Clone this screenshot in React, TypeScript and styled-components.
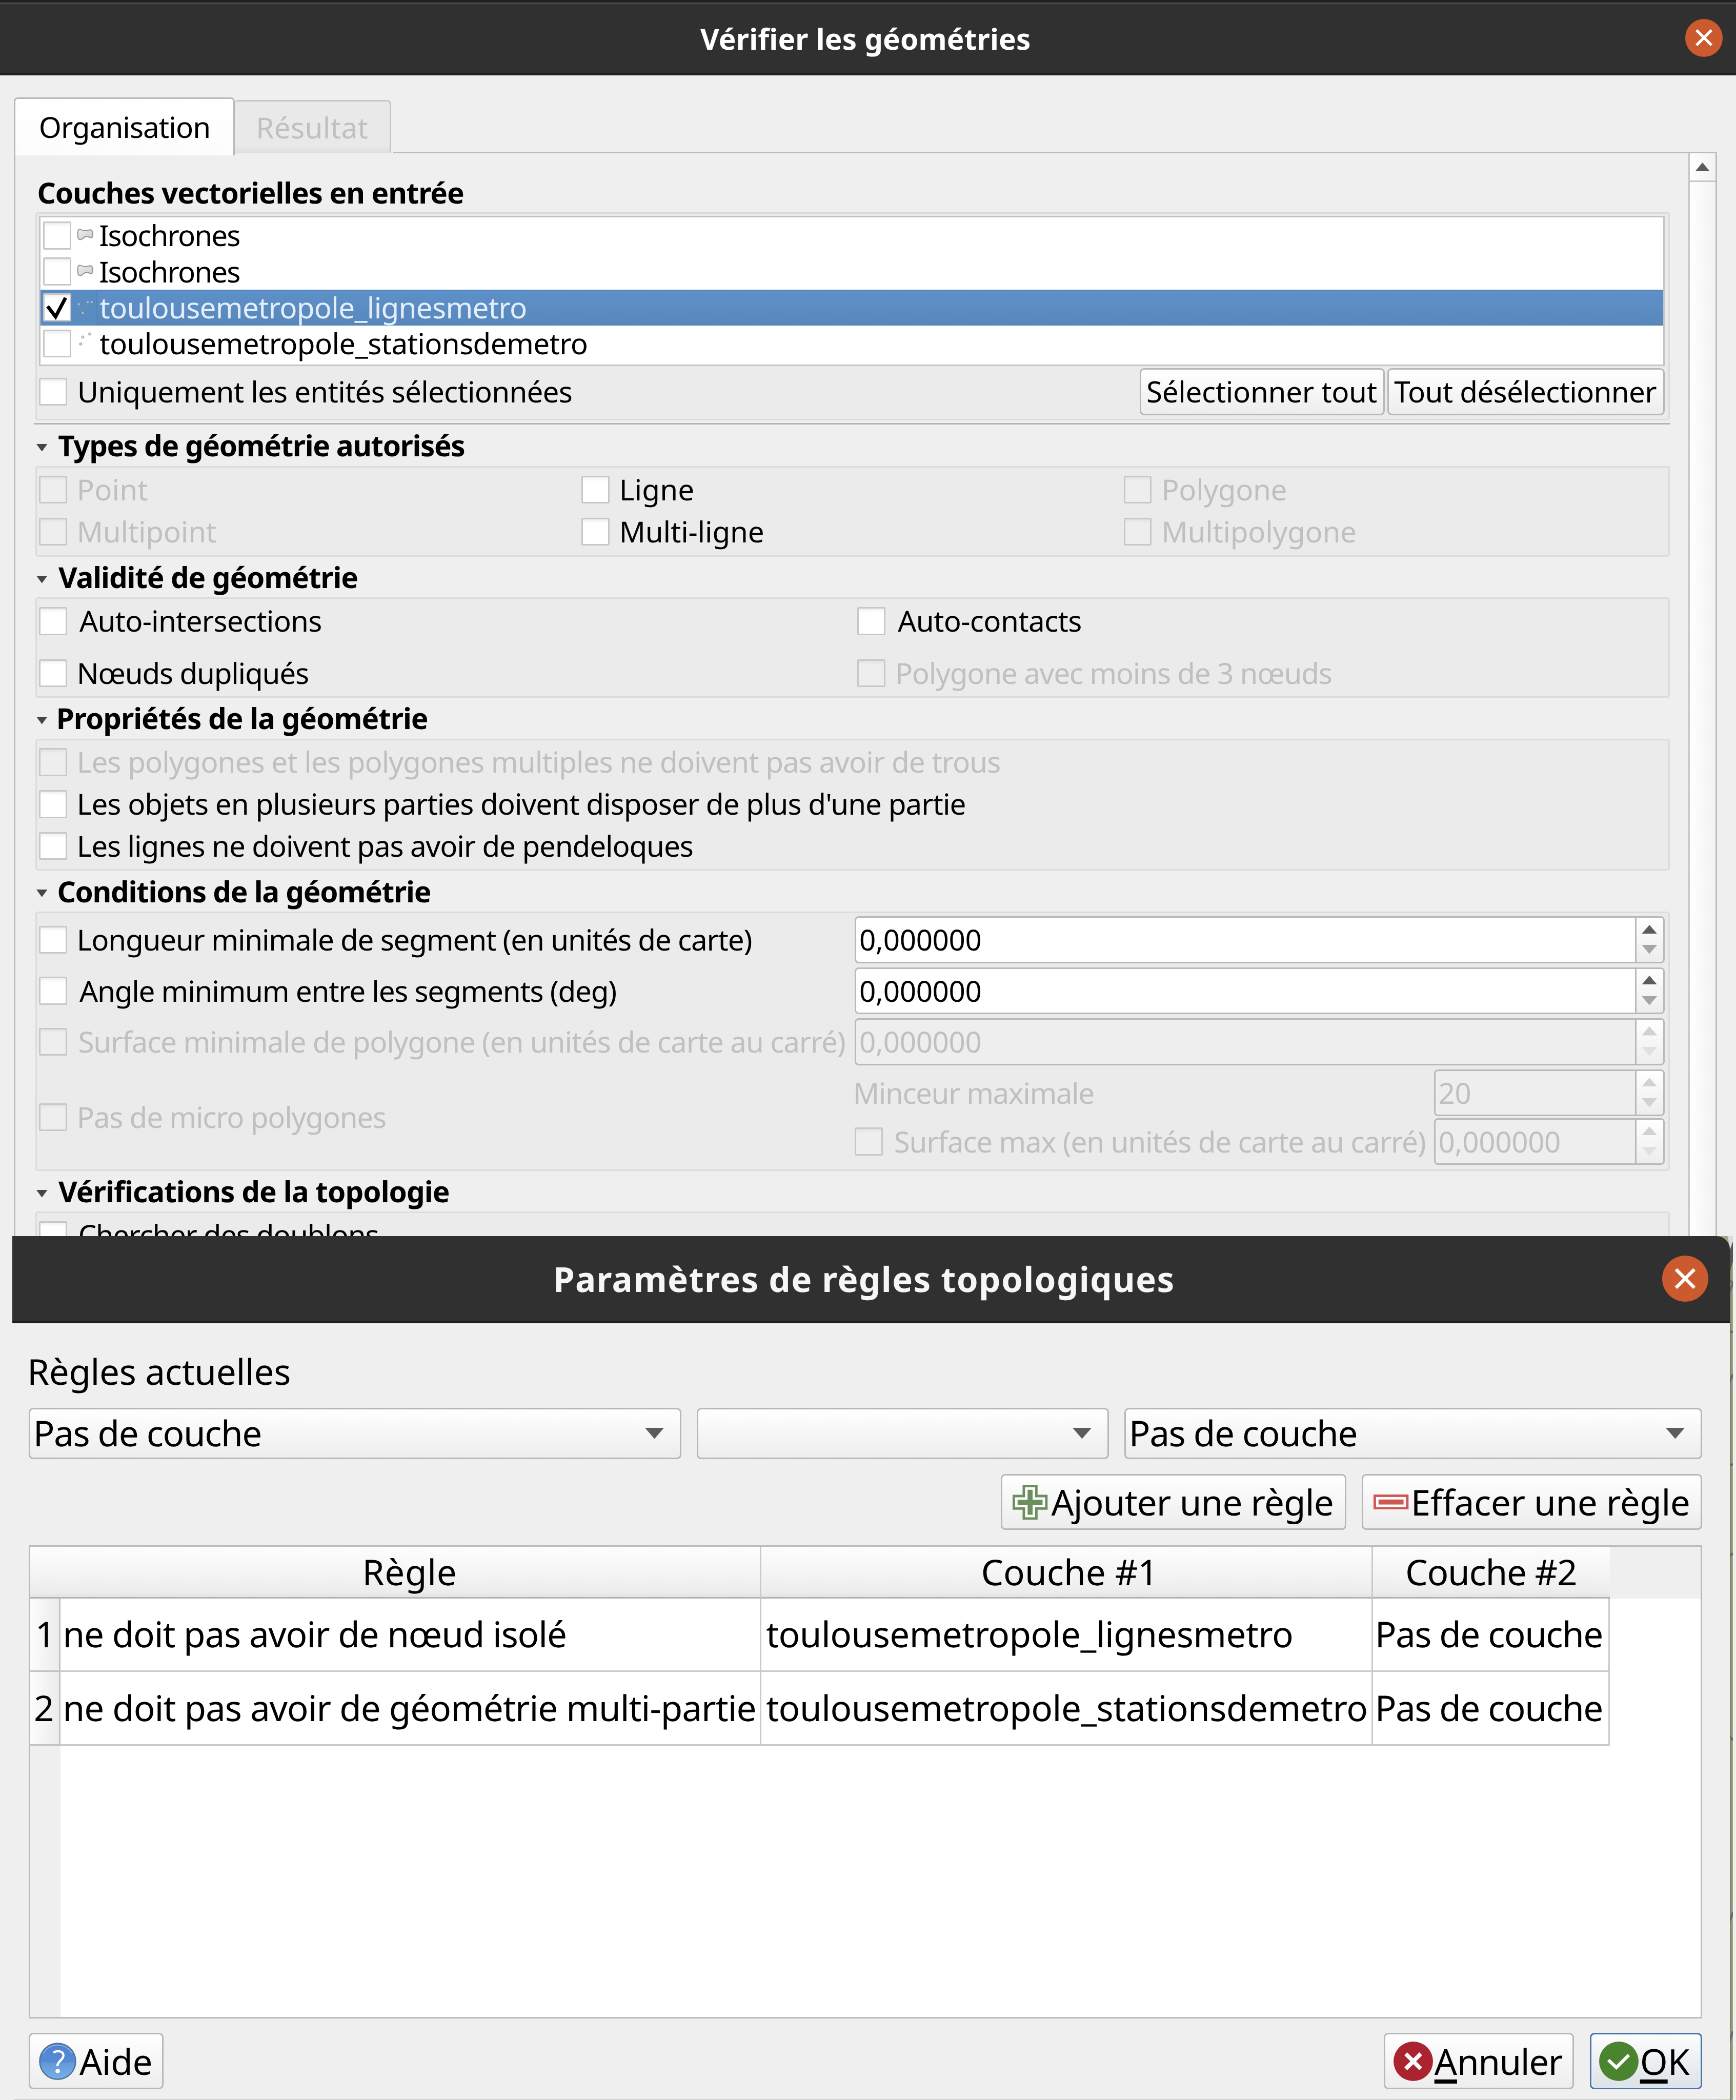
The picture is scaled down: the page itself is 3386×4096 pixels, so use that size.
import React, { useLayoutEffect, useState } from 'react';
import styled, { createGlobalStyle, css } from 'styled-components';

/* Design units: the layout is designed on a 3472-unit grid. */
const u = (n: number) => `${+(n * 0.975).toFixed(2)}px`;

const FONT = '"Noto Sans", "Open Sans", sans-serif';
const LINE = '#bcbcbc';
const MUTED = '#c0c0c0';
const BIG = 71;

const GlobalStyle = createGlobalStyle`
  * { box-sizing: border-box; }
  html, body { margin: 0; padding: 0; background: #efefef; }
  body { font-family: ${FONT}; color: #000; overflow: hidden; text-rendering: geometricPrecision; }
`;

/* ---------- text ---------- */

type LabelProps = {
  text: string;
  w: number;
  size?: number;
  bold?: boolean;
  color?: string;
  mnemonic?: boolean;
};

const LabelBox = styled.span<{ $w: number; $size: number; $bold?: boolean; $color: string }>`
  display: block;
  flex: none;
  width: ${p => u(p.$w)};
  font-size: ${p => u(p.$size)};
  line-height: ${p => u(p.$size * 1.2)};
  font-weight: ${p => (p.$bold ? 700 : 400)};
  color: ${p => p.$color};
  white-space: pre;
  font-kerning: normal;
`;

const Glyphs = styled.span`
  display: inline-block;
`;

const Mnemonic = styled.span`
  letter-spacing: 0;
  text-decoration: underline;
  text-decoration-thickness: ${u(8)};
  text-underline-offset: ${u(9)};
  text-decoration-skip-ink: none;
`;

/* Spreads a caption over its given ink width by tracking. */
function Label({ text, w, size = 58, bold, color = '#000', mnemonic }: LabelProps) {
  const [fit, setFit] = useState({ spacing: 0, shift: 0 });
  useLayoutEffect(() => {
    const ctx = document.createElement('canvas').getContext('2d');
    if (!ctx) return;
    /* Measured large, since glyph bounds are rounded to whole pixels. */
    ctx.font = `${bold ? 700 : 400} 1000px ${FONT}`;
    const m = ctx.measureText(text);
    const k = (size * 0.975) / 1000;
    const ink = (m.actualBoundingBoxLeft + m.actualBoundingBoxRight) * k;
    const gaps = text.length - 1;
    setFit({ spacing: gaps > 0 ? (w * 0.975 - ink) / gaps : 0, shift: m.actualBoundingBoxLeft * k });
  }, [text, w, size, bold]);
  return (
    <LabelBox $w={w} $size={size} $bold={bold} $color={color}>
      <Glyphs style={{ letterSpacing: fit.spacing, marginLeft: fit.shift }}>
        {mnemonic ? (
          <>
            <Mnemonic>{text[0]}</Mnemonic>
            {text.slice(1)}
          </>
        ) : (
          text
        )}
      </Glyphs>
    </LabelBox>
  );
}

/* ---------- window chrome ---------- */

const Screen = styled.div`
  position: relative;
  width: 3386px;
  height: 4096px;
  overflow: hidden;
  background: #efefef;
`;

const Window = styled.section`
  display: flex;
  flex-direction: column;
  height: 100%;
`;

const TitleBar = styled.header<{ $h: number; $edge?: boolean }>`
  flex: none;
  display: grid;
  align-items: center;
  height: ${p => u(p.$h)};
  padding-top: ${p => (p.$edge ? u(5) : 0)};
  background: ${p => (p.$edge ? 'linear-gradient(#1f1f1f 0 4px, #454545 5px 8px, #303030 9px)' : '#303030')};
  border-bottom: 4px solid #1e1e1e;
`;

const TitleRow = styled.div<{ $left: number; $right: number; $drop?: number }>`
  display: flex;
  align-items: center;
  justify-content: space-between;
  padding: 0 ${p => u(p.$right)} 0 ${p => u(p.$left)};
  > span { padding-top: ${p => u(p.$drop ?? 0)}; }
`;

const CloseButton = styled.button<{ $d: number }>`
  width: ${p => u(p.$d)};
  height: ${p => u(p.$d)};
  padding: 0;
  border: 0;
  border-radius: 50%;
  background: #cb5a2e;
  svg { display: block; width: 100%; height: 100%; }
`;

const Close = ({ d }: { d: number }) => (
  <CloseButton $d={d} aria-label="Fermer">
    <svg viewBox="0 0 75 75" stroke="#fff" strokeWidth="5.5" fill="none">
      <path d="M22.5 22.5 52.5 52.5M52.5 22.5 22.5 52.5" />
    </svg>
  </CloseButton>
);

/* ---------- tabs and pane ---------- */

const Tabs = styled.nav`
  display: flex;
  align-items: flex-end;
  height: ${u(160)};
  padding: 0 0 0 ${u(28)};
  margin-bottom: ${u(-7)};
`;

const Tab = styled.div<{ $active?: boolean; $w: number }>`
  width: ${p => u(p.$w)};
  height: ${p => u(p.$active ? 116 : 107)};
  margin-bottom: ${p => (p.$active ? 0 : u(4))};
  display: flex;
  align-items: center;
  justify-content: center;
  padding-bottom: ${p => u(p.$active ? 1 : 0)};
  padding-left: ${p => u(p.$active ? 0 : 3)};
  border: 3px solid ${p => (p.$active ? '#b8b8b8' : '#c6c6c6')};
  border-bottom: 0;
  border-left-width: ${p => (p.$active ? 3 : 0)}px;
  border-radius: ${u(8)} ${u(8)} 0 0;
  background: ${p => (p.$active ? 'linear-gradient(#fff, #fcfcfc)' : 'linear-gradient(#e9e9e9 85%, #dedede)')};
`;

const Pane = styled.div`
  flex: 1;
  display: flex;
  width: ${u(3407)};
  margin-left: ${u(28)};
  background: linear-gradient(${LINE}, ${LINE}) 100% 0 / calc(100% - ${u(755)}) 3px no-repeat;
  border: 3px solid ${LINE};
  border-top: 0;
  padding-top: 3px;
`;

const Form = styled.div`
  width: ${u(3269)};
  margin-left: ${u(40)};
  padding-top: ${u(37)};
`;

const ScrollBar = styled.div`
  width: ${u(58)};
  margin-left: ${u(37)};
  border-left: 3px solid #c6c6c6;
  background: linear-gradient(90deg, #fff, #f2f2f2);
`;

const ScrollUp = styled.div`
  display: flex;
  align-items: center;
  justify-content: center;
  height: ${u(57)};
  border-bottom: 3px solid #c6c6c6;
`;

/* ---------- groups ---------- */

const Heading = styled.h2<{ $h?: number; $plain?: boolean }>`
  display: flex;
  align-items: center;
  height: ${p => u(p.$h ?? 81.7)};
  margin: 0;
  padding-left: ${p => u(p.$plain ? 6 : 2)};
  padding-top: ${p => u(p.$plain ? 3 : 1)};
  gap: ${u(22)};
  svg { margin-top: ${u(8)}; }
`;

const Group = styled.div<{ $h: number; $pad?: number; $gap?: number }>`
  display: grid;
  align-content: start;
  row-gap: ${p => u(p.$gap ?? 0)};
  height: ${p => u(p.$h)};
  padding: calc(${p => u(p.$pad ?? 19.5)} - 3px) ${u(7)} 0 calc(${u(7)} - 3px);
  border: 3px solid #dcdcdc;
  border-radius: ${u(5)};
  background: #ebebeb;
`;

const Columns = styled.div<{ $cols: string }>`
  display: grid;
  grid-template-columns: ${p => p.$cols};
  align-items: center;
`;

const Separator = styled.div`
  height: 3px;
  margin: ${u(5)} 0 ${u(0)} ${u(-3)};
  background: #b4b4b4;
`;

const CheckRow = styled.label<{ $gap?: number }>`
  display: flex;
  align-items: center;
  gap: ${p => u(p.$gap ?? 25)};
  height: ${u(55)};
`;

const Box = styled.span<{ $off?: boolean }>`
  flex: none;
  width: ${u(56)};
  height: ${u(56)};
  border: 3px solid #c8c8c8;
  border-radius: ${u(3)};
  background: ${p => (p.$off ? 'linear-gradient(#e3e3e3, #eeeeee 16%)' : 'linear-gradient(#f0f0f0, #fff 16%)')};
  svg { display: block; width: 100%; height: 100%; }
`;

const Check = ({ text, w, off }: { text: string; w: number; off?: boolean }) => (
  <CheckRow>
    <Box $off={off} />
    <Label text={text} w={w} color={off ? MUTED : '#000'} />
  </CheckRow>
);

/* ---------- layer list ---------- */

const LayerList = styled.div`
  height: ${u(300)};
  border: 3px solid #c4c4c4;
  background: #fff;
`;

const LayerRow = styled.div<{ $selected?: boolean }>`
  display: flex;
  align-items: center;
  height: ${u(72)};
  padding-left: calc(${u(8)} - 3px);
  background: ${p => (p.$selected ? '#5a8cc1' : 'transparent')};
`;

const LayerIcon = styled.svg`
  flex: none;
  width: ${u(51)};
  height: ${u(72)};
`;

const LayerName = styled.div<{ $selected?: boolean }>`
  flex: 1;
  display: flex;
  align-items: center;
  height: 100%;
  padding-left: ${u(7)};
  ${p =>
    p.$selected &&
    css`
      background: linear-gradient(#5e91ca, #5887ba);
      box-shadow: inset 2px 2px 0 #5482b3, inset 0 -2px 0 #5482b3;
    `}
`;

type Layer = { name: string; w: number; kind: 'area' | 'line' | 'point'; selected?: boolean };

const layers: Layer[] = [
  { name: 'Isochrones', w: 279, kind: 'area' },
  { name: 'Isochrones', w: 279, kind: 'area' },
  { name: 'toulousemetropole_lignesmetro', w: 852, kind: 'line', selected: true },
  { name: 'toulousemetropole_stationsdemetro', w: 974, kind: 'point' },
];

const KindIcon = ({ kind }: { kind: Layer['kind'] }) => (
  <LayerIcon viewBox="142 0 51 72">
    <defs>
      <linearGradient id="area" x1="0" y1="0" x2="1" y2="1">
        <stop offset="0" stopColor="#ececec" />
        <stop offset="1" stopColor="#cfcfcf" />
      </linearGradient>
    </defs>
    {kind === 'area' && (
      <path
        d="M155 31C155 25 158 23 161 24.500C167 27 174 27 179 25C184 24 185 30 185 35C185 41 182 42 178 39.500C173 37 170 38 165 42C160 47 155 44 155 38Z"
        fill="url(#area)"
        stroke="#979794"
        strokeWidth="2.200"
      />
    )}
    {kind === 'line' && (
      <g>
        <path d="M157 29 165 47 175 25H183" fill="none" stroke="#7e8f98" strokeWidth="1.600" />
        {[[157, 29], [165, 47], [175, 25], [183, 25]].map(([x, y]) => (
          <circle key={`${x}-${y}`} cx={x} cy={y} r="2" fill="#b5c0c8" />
        ))}
      </g>
    )}
    {kind === 'point' &&
      [[161, 37], [165, 23], [179, 17]].map(([x, y]) => (
        <circle key={x} cx={x} cy={y} r="2.200" fill="#e8e8e8" stroke="#aaaaa6" strokeWidth="1.700" />
      ))}
  </LayerIcon>
);

/* ---------- buttons and fields ---------- */

const Footer = styled.div`
  display: flex;
  align-items: center;
  justify-content: space-between;
  height: ${u(95)};
  margin-top: ${u(4)};
`;

const ButtonRow = styled.div<{ $gap: number }>`
  display: flex;
  justify-content: flex-end;
  gap: ${p => u(p.$gap)};
`;

const Button = styled.button<{ $w: number; $h: number; $pad?: number; $gap?: number; $default?: boolean }>`
  display: flex;
  align-items: center;
  justify-content: flex-start;
  gap: ${p => u(p.$gap ?? 0)};
  width: ${p => u(p.$w)};
  height: ${p => u(p.$h)};
  padding: 0 0 0 calc(${p => u(p.$pad ?? 0)} - 3px);
  font-family: inherit;
  text-align: left;
  border: 3px solid ${p => (p.$default ? '#4a76a8' : '#b8b8b8')};
  border-radius: ${u(9)};
  background: ${p => (p.$default ? 'linear-gradient(#fdfdfd, #dce2e8)' : 'linear-gradient(#fff, #ededed)')};
  box-shadow: ${p => (p.$default ? 'inset 0 0 0 2px #eef3f8' : 'none')};
  svg { flex: none; }
`;

const Arrow = ({ w, h, down, color = '#5c5c5c' }: { w: number; h: number; down?: boolean; color?: string }) => (
  <svg width={w * 0.975} height={h * 0.975} viewBox="0 0 10 10" preserveAspectRatio="none">
    <path d={down ? 'M0 0H10L5 10Z' : 'M0 10H10L5 0Z'} fill={color} />
  </svg>
);

const SpinBox = styled.div<{ $w: number; $off?: boolean }>`
  display: flex;
  width: ${p => u(p.$w)};
  height: ${u(94)};
  border: 3px solid #b9b9b9;
  border-radius: ${u(8)};
  overflow: hidden;
  background: ${p => (p.$off ? '#eeeeee' : '#fff')};
`;

const SpinValue = styled.div`
  flex: 1;
  display: flex;
  align-items: center;
  padding-left: ${u(8.5)};
`;

const Stepper = styled.div`
  display: flex;
  flex-direction: column;
  align-items: center;
  gap: ${u(23)};
  padding-top: ${u(13.5)};
  padding-right: ${u(2)};
  width: ${u(56)};
  border-left: 3px solid #b9b9b9;
  background: linear-gradient(#fff, #ededed);
`;

type SpinProps = { value?: string; vw?: number; w?: number; off?: boolean; down?: string };

const Spin = ({ value = '0,000000', vw = 240, w = 1620, off, down }: SpinProps) => (
  <SpinBox $w={w} $off={off}>
    <SpinValue>
      <Label text={value} w={vw} color={off ? MUTED : '#000'} />
    </SpinValue>
    <Stepper>
      <Arrow w={31} h={18} color={off ? '#d2d2d2' : '#5c5c5c'} />
      <Arrow w={31} h={18} down color={down ?? (off ? '#e0e0e0' : '#a6a6a6')} />
    </Stepper>
  </SpinBox>
);

const SliverRows = styled.div`
  display: grid;
  row-gap: ${u(3.5)};
`;

const SliverRow = styled.div<{ $pad?: number }>`
  display: flex;
  align-items: center;
  justify-content: space-between;
  padding-left: ${p => u(p.$pad ?? 0)};
`;

/* ---------- rules dialog ---------- */

const Dialog = styled.section`
  position: absolute;
  left: ${u(25)};
  top: ${u(2473)};
  width: ${u(3435)};
  height: ${u(1727)};
  display: flex;
  flex-direction: column;
  background: #efefef;
  border-top-right-radius: ${u(26)};
  overflow: hidden;
`;

const MapSliver = styled.svg`
  position: absolute;
  left: ${u(3434)};
  top: ${u(2473)};
  width: ${u(33)};
  height: ${u(1728)};
`;

const DialogBody = styled.div`
  padding: ${u(54)} ${u(55)} 0 ${u(32)};
`;

const Caption = styled.div`
  display: flex;
  align-items: center;
  height: ${u(87)};
  padding-left: ${u(4)};
  margin-bottom: ${u(28)};
`;

const Combos = styled.div`
  display: flex;
  gap: ${u(30.5)};
  margin-bottom: ${u(30)};
`;

const Combo = styled.div<{ $w: number }>`
  display: flex;
  align-items: center;
  justify-content: space-between;
  width: ${p => u(p.$w)};
  height: ${u(103)};
  padding: 0 calc(${u(35)} - 3px) 0 calc(${u(16)} - 3px);
  border: 3px solid #b8b8b8;
  border-radius: ${u(9)};
  background: linear-gradient(#fff, #ededed);
`;

const Table = styled.div`
  display: grid;
  grid-template-columns: ${u(61)} ${u(1402.5)} ${u(1223.5)} ${u(473)} 1fr;
  grid-template-rows: ${u(103.5)} ${u(147.3)} ${u(147.3)} 1fr;
  height: ${u(947)};
  margin: ${u(30)} 0 ${u(29)};
  border: 3px solid ${LINE};
  background: #fff;
`;

const HeadCell = styled.div<{ $span?: boolean; $last?: boolean }>`
  display: flex;
  align-items: center;
  justify-content: center;
  grid-column: ${p => (p.$span ? 'span 2' : 'auto')};
  padding-left: ${p => (p.$span ? u(61) : 0)};
  padding-top: ${u(2)};
  border-bottom: 3px solid #b4b4b4;
  border-right: ${p => (p.$last ? '0' : '3px solid #cacaca')};
  background: linear-gradient(#fdfdfd, #f5f5f5 50%, #ececec 92%, #e2e2e2);
`;

const HeadRest = styled.div`
  background: #efefef;
`;

const NumCell = styled.div`
  display: flex;
  align-items: center;
  justify-content: center;
  padding-right: ${u(2)};
  border-right: 3px solid #c2c2c2;
  border-bottom: 3px solid #c2c2c2;
  background: linear-gradient(90deg, #fcfcfc, #ececec);
`;

const Cell = styled.div`
  display: flex;
  align-items: center;
  padding-left: ${u(10)};
  border-right: 3px solid #cacaca;
  border-bottom: 3px solid #cacaca;
`;

const NumRest = styled.div`
  background: #efefef;
`;

const Actions = styled.div`
  display: flex;
  justify-content: space-between;
`;

const rules = [
  { n: '1', nw: 24, rule: 'ne doit pas avoir de nœud isolé', rw: 1000, layer: 'toulousemetropole_lignesmetro', lw: 1051 },
  { n: '2', nw: 34, rule: 'ne doit pas avoir de géométrie multi-partie', rw: 1379, layer: 'toulousemetropole_stationsdemetro', lw: 1200 },
];

const PlusIcon = () => (
  <svg width={68.3} height={68.3} viewBox="0 0 70 70">
    <path d="M22.500 2.500H47.500V22.500H67.500V47.500H47.500V67.500H22.500V47.500H2.500V22.500H22.500Z" fill="#fff" stroke="#6c8f5e" strokeWidth="5" />
    <path d="M35 10V60M10 35H60" stroke="#6c8f5e" strokeWidth="10" />
  </svg>
);

const MinusIcon = () => (
  <svg width={68.3} height={29.3} viewBox="0 0 70 30">
    <rect x="2.500" y="2.500" width="65" height="25" fill="#fff" stroke="#cf5753" strokeWidth="5" />
    <rect x="10" y="10" width="50" height="10" fill="#cf5753" />
  </svg>
);

const HelpIcon = () => (
  <svg width={73} height={73} viewBox="0 0 75 75">
    <defs>
      <linearGradient id="help" x1="0" y1="0" x2="0" y2="1">
        <stop offset="0" stopColor="#5080d0" />
        <stop offset=".53" stopColor="#558cd5" />
        <stop offset=".54" stopColor="#6398d9" />
        <stop offset="1" stopColor="#76b1e6" />
      </linearGradient>
    </defs>
    <circle cx="37.500" cy="37.500" r="36" fill="url(#help)" stroke="#4f7394" strokeWidth="2.500" />
    <path d="M8 22A34 34 0 0 1 67 22" fill="none" stroke="#8db9e8" strokeWidth="1.800" />
    <path d="M29 20C38 15 49 17 49 26C49 35 37 37 37 47" fill="none" stroke="#fff" strokeWidth="4.500" />
    <circle cx="37.500" cy="57" r="4.500" fill="#fff" />
  </svg>
);

const CancelIcon = () => (
  <svg width={77} height={77} viewBox="0 0 79 79">
    <circle cx="39.500" cy="39.500" r="39.500" fill="#a9242f" />
    <path d="M24.500 24.500 54.500 54.500M54.500 24.500 24.500 54.500" stroke="#fff" strokeWidth="8" />
  </svg>
);

const OkIcon = () => (
  <svg width={77} height={77} viewBox="0 0 79 79">
    <circle cx="39.500" cy="39.500" r="39.500" fill="#4b842f" />
    <path d="M18.500 37 34.500 52 59.500 27" fill="none" stroke="#fff" strokeWidth="6.500" />
  </svg>
);

export default function App() {
  return (
    <Screen>
      <GlobalStyle />
      <Window>
        <TitleBar $h={151} $edge>
          <TitleRow $left={1401} $right={26.5} $drop={4}>
            <Label text="Vérifier les géométries" w={659} bold size={58} color="#fff" />
            <Close d={75} />
          </TitleRow>
        </TitleBar>
        <Tabs>
          <Tab $active $w={442}>
            <Label text="Organisation" w={337} />
          </Tab>
          <Tab $w={313}>
            <Label text="Résultat" w={218} color={MUTED} />
          </Tab>
        </Tabs>
        <Pane>
          <Form>
            <Heading $h={81} $plain>
              <Label text="Couches vectorielles en entrée" w={850} bold />
            </Heading>
            <Group $h={416} $pad={7}>
              <LayerList>
                {layers.map((layer, i) => (
                  <LayerRow key={i} $selected={layer.selected}>
                    <Box>
                      {layer.selected && (
                        <svg viewBox="0 0 50 50">
                          <path d="M6 23 22 44 42 6" fill="none" stroke="#000" strokeWidth="7" />
                        </svg>
                      )}
                    </Box>
                    <KindIcon kind={layer.kind} />
                    <LayerName $selected={layer.selected}>
                      <Label text={layer.name} w={layer.w} color={layer.selected ? '#e4eefa' : '#000'} />
                    </LayerName>
                  </LayerRow>
                ))}
              </LayerList>
              <Footer>
                <Check text="Uniquement les entités sélectionnées" w={984} />
                <ButtonRow $gap={5}>
                  <Button $w={490} $h={95} $pad={16}>
                    <Label text="Sélectionner tout" w={458} />
                  </Button>
                  <Button $w={555} $h={95} $pad={14}>
                    <Label text="Tout désélectionner" w={525} />
                  </Button>
                </ButtonRow>
              </Footer>
            </Group>
            <Separator />

            <Heading $h={83.5}>
              <Arrow w={22} h={15} down color="#454545" />
              <Label text="Types de géométrie autorisés" w={812} bold />
            </Heading>
            <Group $h={181} $gap={29}>
              <Columns $cols={`${u(1085)} ${u(1085)} 1fr`}>
                <Check text="Point" w={136} off />
                <Check text="Ligne" w={142} />
                <Check text="Polygone" w={243} off />
              </Columns>
              <Columns $cols={`${u(1085)} ${u(1085)} 1fr`}>
                <Check text="Multipoint" w={273} off />
                <Check text="Multi-ligne" w={282} />
                <Check text="Multipolygone" w={382} off />
              </Columns>
            </Group>

            <Heading>
              <Arrow w={22} h={15} down color="#454545" />
              <Label text="Validité de géométrie" w={598} bold />
            </Heading>
            <Group $h={200.500} $gap={49.500}>
              <Columns $cols={`${u(1637)} 1fr`}>
                <Check text="Auto-intersections" w={483} />
                <Check text="Auto-contacts" w={366} />
              </Columns>
              <Columns $cols={`${u(1637)} 1fr`}>
                <Check text="Nœuds dupliqués" w={457} />
                <Check text="Polygone avec moins de 3 nœuds" w={867} off />
              </Columns>
            </Group>

            <Heading>
              <Arrow w={22} h={15} down color="#454545" />
              <Label text="Propriétés de la géométrie" w={738} bold />
            </Heading>
            <Group $h={264.500} $gap={29}>
              <Check text="Les polygones et les polygones multiples ne doivent pas avoir de trous" w={1841} off />
              <Check text="Les objets en plusieurs parties doivent disposer de plus d'une partie" w={1771} />
              <Check text="Les lignes ne doivent pas avoir de pendeloques" w={1226} />
            </Group>

            <Heading>
              <Arrow w={22} h={15} down color="#454545" />
              <Label text="Conditions de la géométrie" w={744} bold />
            </Heading>
            <Group $h={518.500} $pad={9.500} $gap={8}>
              <Columns $cols={`${u(1632)} 1fr`}>
                <Check text="Longueur minimale de segment (en unités de carte)" w={1344} />
                <Spin />
              </Columns>
              <Columns $cols={`${u(1632)} 1fr`}>
                <Check text="Angle minimum entre les segments (deg)" w={1073} />
                <Spin />
              </Columns>
              <Columns $cols={`${u(1632)} 1fr`}>
                <Check text="Surface minimale de polygone (en unités de carte au carré)" w={1531} off />
                <Spin off />
              </Columns>
              <Columns $cols={`${u(1632)} ${u(1620)}`}>
                <Check text="Pas de micro polygones" w={612} off />
                <SliverRows>
                  <SliverRow $pad={2}>
                    <Label text="Minceur maximale" w={475} color={MUTED} />
                    <Spin value="20" vw={61} w={461.500} off down="#d2d2d2" />
                  </SliverRow>
                  <SliverRow>
                    <Check text="Surface max (en unités de carte au carré)" w={1060} off />
                    <Spin w={461.500} off />
                  </SliverRow>
                </SliverRows>
              </Columns>
            </Group>

            <Heading>
              <Arrow w={22} h={15} down color="#454545" />
              <Label text="Vérifications de la topologie" w={781} bold />
            </Heading>
            <Group $h={400}>
              <Check text="Chercher des doublons" w={597} />
            </Group>
          </Form>
          <ScrollBar>
            <ScrollUp>
              <Arrow w={30} h={18} />
            </ScrollUp>
          </ScrollBar>
        </Pane>
      </Window>

      <MapSliver viewBox="0 0 33 1727" preserveAspectRatio="none">
        <rect width="33" height="1727" fill="#a3a381" />
        <rect x="26" y="60" width="4" height="1667" fill="#84846d" />
        <path d="M22 0 33 0V45L26 75V20Z" fill="#dcdcdc" />
        <path d="M33 10V50L26 75V30Z" fill="#555" />
        <path d="M26 88 33 94 26 112M26 190 33 192M26 292 33 276M26 458 33 456M26 640 33 634M26 1000 33 1008M26 1370 33 1352M26 1610 33 1590" stroke="#666" strokeWidth="4" fill="none" />
      </MapSliver>

      <Dialog>
        <TitleBar $h={174}>
          <TitleRow $left={1087} $right={43}>
            <Label text="Paramètres de règles topologiques" w={1235} bold size={69} color="#f6f6f6" />
            <Close d={92} />
          </TitleRow>
        </TitleBar>
        <DialogBody>
          <Caption>
            <Label text="Règles actuelles" w={518} size={BIG} />
          </Caption>
          <Combos>
            <Combo $w={1306}>
              <Label text="Pas de couche" w={448} size={BIG} />
              <Arrow w={38} h={22} down />
            </Combo>
            <Combo $w={825}>
              <span />
              <Arrow w={38} h={22} down />
            </Combo>
            <Combo $w={1156}>
              <Label text="Pas de couche" w={448} size={BIG} />
              <Arrow w={38} h={22} down />
            </Combo>
          </Combos>
          <ButtonRow $gap={31}>
            <Button $w={691} $h={112} $pad={24} $gap={7}>
              <PlusIcon />
              <Label text="Ajouter une règle" w={562} size={BIG} />
            </Button>
            <Button $w={681} $h={112} $pad={24} $gap={11}>
              <MinusIcon />
              <Label text="Effacer une règle" w={549} size={BIG} />
            </Button>
          </ButtonRow>
          <Table>
            <HeadCell $span>
              <Label text="Règle" w={179} size={BIG} />
            </HeadCell>
            <HeadCell>
              <Label text="Couche #1" w={336} size={BIG} />
            </HeadCell>
            <HeadCell $last>
              <Label text="Couche #2" w={338} size={BIG} />
            </HeadCell>
            <HeadRest />
            {rules.map(r => (
              <React.Fragment key={r.n}>
                <NumCell>
                  <Label text={r.n} w={r.nw} size={BIG} />
                </NumCell>
                <Cell>
                  <Label text={r.rule} w={r.rw} size={BIG} />
                </Cell>
                <Cell>
                  <Label text={r.layer} w={r.lw} size={BIG} />
                </Cell>
                <Cell>
                  <Label text="Pas de couche" w={447} size={BIG} />
                </Cell>
                <span />
              </React.Fragment>
            ))}
            <NumRest />
          </Table>
          <Actions>
            <Button $w={270} $h={113} $pad={21} $gap={6}>
              <HelpIcon />
              <Label text="Aide" w={143} size={BIG} />
            </Button>
            <ButtonRow $gap={31.500}>
              <Button $w={380} $h={113} $pad={19} $gap={3}>
                <CancelIcon />
                <Label text="Annuler" w={255} size={BIG} mnemonic />
              </Button>
              <Button $w={225} $h={113} $pad={19} $gap={6} $default>
                <OkIcon />
                <Label text="OK" w={96} size={BIG} mnemonic />
              </Button>
            </ButtonRow>
          </Actions>
        </DialogBody>
      </Dialog>
    </Screen>
  );
}
